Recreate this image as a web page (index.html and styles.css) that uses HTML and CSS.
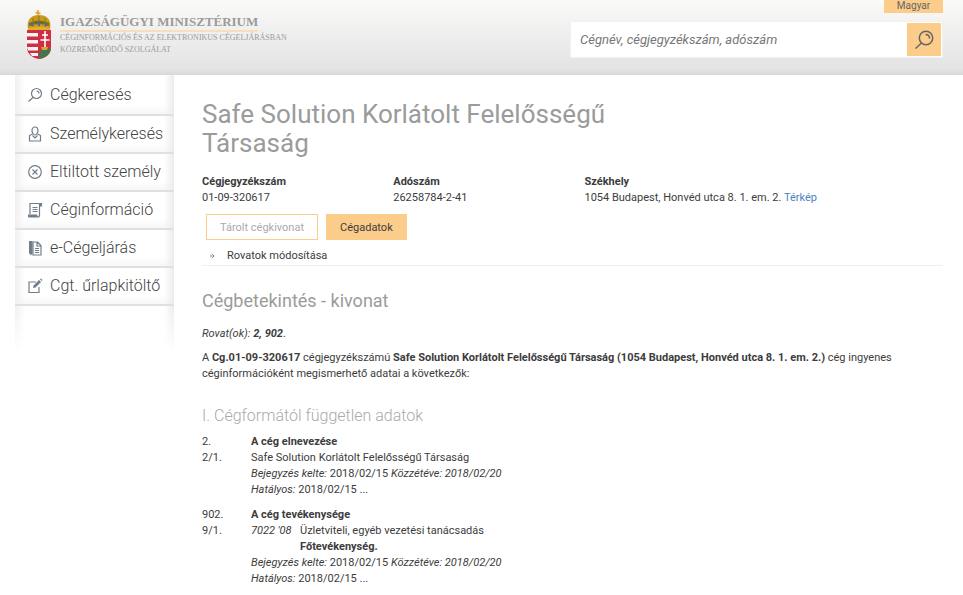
FILE: index.html
```html
<!DOCTYPE html>
<html lang="hu">

<head>
<meta charset="utf-8">
<title>Céginformációs Szolgálat</title>
<link rel="stylesheet" href="styles.css">
</head>

<body>

<header class="header">

<a class="logo" href="#">
<svg class="crest" viewBox="0 0 24 50" aria-hidden="true">
  <path d="M11 0v6M8.500 2.500l5 1" stroke="#e0a030" stroke-width="1.500" fill="none"/>
  <path d="M1 19C-1 9 5 5 12 5s13 4 11 14z" fill="#c99a1c"/>
  <path d="M2 13Q12 8 22 13v3Q12 12 2 16z" fill="#756a2b"/>
  <path d="M12 6v12M6 8v9M18 8v9" stroke="#8d7424" stroke-width="1"/>
  <path d="M4 13h2v3H4zM11 12h2v4h-2zM18 13h2v3h-2z" fill="#3f70a0"/>
  <path d="M1 18Q12 15 23 18v2H1z" fill="#e0b02c"/>
  <path d="M0 20h24v17c0 7-5 11-12 12C5 48 0 44 0 37z" fill="#d02f43"/>
  <path d="M0 23h11v3.500H0zM0 30h11v3.500H0zM0 37h11v3.500H1zM3 43h8v3H5z" fill="#f4f4f4"/>
  <path d="M12 43Q14 38 24 39C23 45 18 48 12 49z" fill="#477350"/>
  <path d="M14 37h7l-1 3h-5z" fill="#d2aa2a"/>
  <path d="M18 21v16M15 25h6M13.500 30h9" stroke="#fff" stroke-width="1.600"/>
</svg>
<span class="logo-text">
<span class="logo-title">IGAZSÁGÜGYI MINISZTÉRIUM</span>
<span class="logo-sub">CÉGINFORMÁCIÓS ÉS AZ ELEKTRONIKUS CÉGELJÁRÁSBAN<br>KÖZREMŰKÖDŐ SZOLGÁLAT</span>
</span>
</a>

<div class="tools">
<button class="language" type="button">Magyar</button>
<form class="search">
<input type="text" aria-label="Keresés" placeholder="Cégnév, cégjegyzékszám, adószám">
<button type="submit" aria-label="Keresés">
<svg viewBox="0 0 20 20"><circle cx="12" cy="8" r="6.700"/><path d="M7.500 13L1.500 18.500M11.500 4.500q4 0 4 4"/></svg>
</button>
</form>
</div>

</header>

<div class="page">

<nav class="menu">
<a href="#">
<svg viewBox="0 0 16 16"><circle cx="9.500" cy="6.500" r="5"/><path d="M6 10.500L1.500 14.500M9.500 4q2.500 0 2.500 2.500"/></svg>
Cégkeresés</a>
<a href="#">
<svg viewBox="0 0 16 16"><path d="M8 1c-2 0-3 1.500-3 3.500S6.500 9 8 9s3-2.500 3-4.500S10 1 8 1zM5.500 8L2.500 9.500V15h11V9.500L10.500 8M5.500 9.500L8 12l2.500-2.500"/></svg>
Személykeresés</a>
<a href="#">
<svg viewBox="0 0 16 16"><circle cx="8" cy="8" r="6.300"/><path d="M5.500 5.500l5 5M10.500 5.500l-5 5"/></svg>
Eltiltott személy</a>
<a href="#">
<svg viewBox="0 0 16 16"><path d="M3 12V1.500h11.500V4H13M12.500 2v11q0 2-2 2"/><path class="solid" d="M1 12.500h9l1 3H2q-1 0-1-1zM13 1h2v3h-2zM5.500 5h5v1h-5zM5.500 7h5v1h-5zM5.500 9h5v1h-5z"/></svg>
Céginformáció</a>
<a href="#">
<svg viewBox="0 0 16 16"><path d="M6 2h4.500L14 5.500V15H6zM10 2v4h4M8 8.500h4M8 10.500h4M8 12.500h4"/><path class="solid" d="M2 1h3.500v12L4 15.500 2 13z"/></svg>
e-Cégeljárás</a>
<a href="#">
<svg viewBox="0 0 16 16"><path d="M9 4H2v10.500h10V9"/><path class="solid" d="M6 10l.5-2.500L12 2l2 2-5.500 5.500zM13 1l1-.500L15.500 2l-1 1z"/></svg>
Cgt. űrlapkitöltő</a>
</nav>

<main class="content">

<h1>Safe Solution Korlátolt Felelősségű Társaság</h1>

<dl class="summary">
<div><dt>Cégjegyzékszám</dt><dd>01-09-320617</dd></div>
<div><dt>Adószám</dt><dd>26258784-2-41</dd></div>
<div class="wide"><dt>Székhely</dt><dd>1054 Budapest, Honvéd utca 8. 1. em. 2. <a href="#">Térkép</a></dd></div>
</dl>

<div class="buttons">
<button class="outline" type="button">Tárolt cégkivonat</button>
<button class="active" type="button">Cégadatok</button>
</div>

<a class="modify" href="#">
<svg viewBox="0 0 6 6"><path d="M0 3h3M2.500 .500L5 3 2.500 5.500"/></svg>
Rovatok módosítása</a>

<h2>Cégbetekintés - kivonat</h2>

<p><i>Rovat(ok): <b>2, 902</b></i>.</p>

<p>A <b>Cg.01-09-320617</b> cégjegyzékszámú <b>Safe Solution Korlátolt Felelősségű Társaság (1054 Budapest, Honvéd utca 8. 1. em. 2.)</b> cég ingyenes céginformációként megismerhető adatai a következők:</p>

<h3>I. Cégformától független adatok</h3>

<table class="entries">
<tbody>
<tr><td>2.</td><th colspan="2">A cég elnevezése</th></tr>
<tr><td>2/1.</td><td colspan="2">Safe Solution Korlátolt Felelősségű Társaság</td></tr>
<tr><td></td><td colspan="2"><i>Bejegyzés kelte:</i> 2018/02/15 <i>Közzétéve: 2018/02/20</i></td></tr>
<tr><td></td><td colspan="2"><i>Hatályos:</i> 2018/02/15 ...</td></tr>
</tbody>
<tbody>
<tr><td>902.</td><th colspan="2">A cég tevékenysége</th></tr>
<tr><td>9/1.</td><td><i>7022 '08</i></td><td>Üzletviteli, egyéb vezetési tanácsadás</td></tr>
<tr><td></td><td></td><td><b>Főtevékenység.</b></td></tr>
<tr><td></td><td colspan="2"><i>Bejegyzés kelte:</i> 2018/02/15 <i>Közzétéve: 2018/02/20</i></td></tr>
<tr><td></td><td colspan="2"><i>Hatályos:</i> 2018/02/15 ...</td></tr>
</tbody>
</table>

</main>

</div>

</body>

</html>
```
FILE: styles.css
```css
* {
   box-sizing: border-box; }

body {
   margin: 0;
   background: #fff;
   color: #3c3c3c;
   font: 11px/16px Roboto, sans-serif; }

a {
   color: inherit;
   text-decoration: none; }

button, input {
   margin: 0;
   border: 0;
   border-radius: 0;
   font-family: inherit;
   color: inherit; }

svg {
   fill: none;
   stroke: #727d8b;
   stroke-width: 1.2; }

.header {
   display: flex;
   justify-content: space-between;
   height: 75px;
   padding: 0 20px 0 27px;
   border-bottom: 1px solid #d8d8d8;
   background: linear-gradient(#fafaf9, #e3e3e3 94%, #dadada); }

.logo {
   display: flex;
   align-items: flex-start;
   gap: 9px;
   padding-top: 10px; }

.crest {
   width: 24px;
   height: 50px;
   stroke: none; }

.logo-text {
   padding-top: 4px;
   color: #9b9b9b;
   font-family: "Liberation Serif", serif; }

.logo-title {
   display: block;
   width: max-content;
   border-bottom: 2px solid #f8dfba;
   font-size: 13px;
   font-weight: bold;
   line-height: 16px; }

.logo-sub {
   display: block;
   font-size: 8px;
   line-height: 12px; }

.tools {
   display: flex;
   flex-direction: column;
   align-items: flex-end;
   gap: 8px;
   width: 373px; }

.language {
   width: 59px;
   height: 13px;
   padding: 0 0 2px;
   background: #fccc8b;
   color: #666;
   font-size: 10px;
   line-height: 11px; }

.search {
   display: flex;
   width: 100%;
   height: 37px;
   padding: 1px;
   border: 1px solid #f0f0f0;
   background: #fff; }

.search input {
   flex: 1;
   min-width: 0;
   padding: 0 8px;
   background: none;
   font-size: 13px;
   font-style: italic; }

.search input::placeholder {
   color: #777; }

.search button {
   display: grid;
   place-items: center;
   width: 34px;
   padding: 0;
   background: #fccc8b; }

.search svg {
   width: 20px;
   height: 20px;
   stroke: #666;
   stroke-width: 1.5; }

.page {
   display: flex;
   align-items: flex-start;
   gap: 28px;
   padding: 0 20px 0 15px; }

.menu {
   flex: 0 0 159px; }

.menu a {
   display: flex;
   align-items: center;
   gap: 7px;
   height: 38px;
   padding-left: 12px;
   border-bottom: 2px solid #e0e0e0;
   background: linear-gradient(90deg, #f0f0f0, transparent 10px, transparent 149px, #ececec), linear-gradient(#fff 75%, #f7f7f7);
   color: #444;
   font-size: 16px;
   font-weight: 300; }

.menu a:first-child {
   height: 41px; }

.menu svg {
   width: 16px;
   height: 16px; }

.menu .solid {
   fill: #727d8b;
   stroke: none; }

.menu:after {
   content: "";
   display: block;
   height: 48px;
   background: linear-gradient(transparent, #fff), linear-gradient(90deg, #f0f0f0, #fff 10px, #fff 149px, #ececec); }

.content {
   flex: 1;
   min-width: 0;
   padding-top: 25px; }

h1, h2, h3 {
   margin: 0;
   color: #9b9b9b;
   font-weight: 400; }

h1 {
   width: 60%;
   font-size: 26px;
   line-height: 29px; }

h2 {
   margin: 24px 0 14px;
   font-size: 18px;
   line-height: 22px; }

h3 {
   margin: 24px 0 8px;
   color: #aaa;
   font-size: 16px;
   font-weight: 300;
   line-height: 20px; }

p {
   margin: 0 0 8px; }

.summary {
   display: grid;
   grid-template-columns: repeat(4, 1fr);
   gap: 24px;
   margin: 16px 0 8px; }

.summary .wide {
   grid-column: span 2; }

.summary dt, b, th {
   font-weight: 700; }

.summary dd {
   margin: 0; }

.summary a {
   color: #4a83c4; }

.buttons {
   display: flex;
   gap: 8px;
   padding-left: 4px; }

.buttons button {
   height: 26px;
   padding: 0 13px;
   border: 1px solid #fccc8b;
   background: #fff;
   color: #aaa;
   font-size: 11px; }

.buttons .active {
   background: #fccc8b;
   color: #3c3c3c; }

.modify {
   display: flex;
   align-items: center;
   gap: 12px;
   padding: 8px 0 1px 8px;
   border-bottom: 1px solid #f0f0f0; }

.modify svg {
   width: 5px;
   height: 6px; }

.entries {
   border-collapse: collapse; }

.entries tbody + tbody:before {
   content: "";
   display: table-row;
   height: 9px; }

.entries td, .entries th {
   padding: 0;
   text-align: left;
   vertical-align: top; }

.entries td:first-child {
   width: 49px; }

.entries td:nth-child(2):not([colspan]) {
   width: 49px; }
```
